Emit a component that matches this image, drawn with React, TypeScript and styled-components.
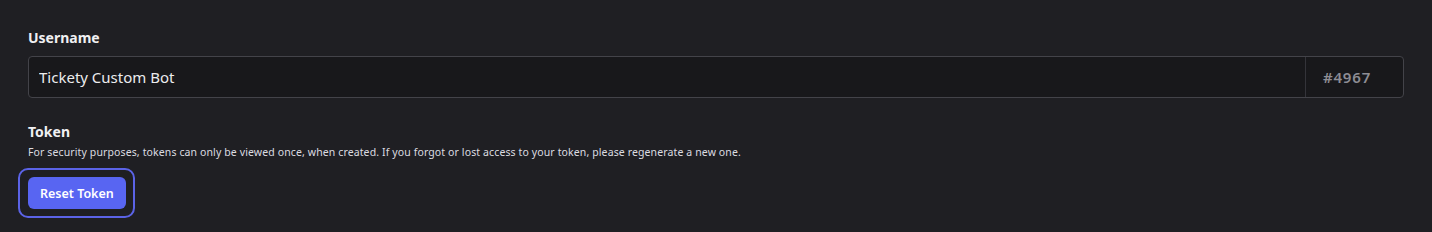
import styled, { createGlobalStyle } from 'styled-components'

const Global = createGlobalStyle`
  html, body { margin: 0; padding: 0; background: #1f1f23; }
  body { font-family: "Noto Sans", "Open Sans", sans-serif; color: #e8e8ea; }
`

const Page = styled.div`
  padding: 28px 28px 12px 28px;
  display: flex;
  flex-direction: column;
`

const Field = styled.div`
  display: flex;
  flex-direction: column;
`

const Label = styled.label`
  font-size: 14px;
  font-weight: 700;
  color: #f0f0f2;
  line-height: 20px;
`

const InputRow = styled.div`
  margin-top: 8px;
  height: 40px;
  display: flex;
  align-items: stretch;
  background: #18181b;
  border: 1px solid #434349;
  border-radius: 4px;
`

const TextInput = styled.input`
  flex: 1;
  min-width: 0;
  background: transparent;
  border: none;
  outline: none;
  color: #ececee;
  font-family: inherit;
  font-size: 15px;
  padding: 0 10px;
`

const Discrim = styled.div`
  width: 98px;
  border-left: 1px solid #34343a;
  display: flex;
  align-items: center;
  padding-left: 17px;
  box-sizing: border-box;
  color: #8d8d94;
  font-size: 15px;
  font-weight: 600;
  letter-spacing: 0.8px;
`

const Section = styled(Field)`
  margin-top: 24px;
`

const Hint = styled.p`
  margin: 3px 0 0;
  font-size: 10.5px;
  letter-spacing: 0.12px;
  color: #dcdce0;
  line-height: 14px;
`

const FocusRing = styled.div`
  margin: 9px 0 0 -10px;
  align-self: flex-start;
  padding: 7px 7px 7px 8px;
  border: 2px solid #5b63e6;
  border-radius: 10px;
`

const Button = styled.button<{ $primary?: boolean }>`
  display: block;
  height: 32px;
  padding: 0 12px;
  border: none;
  border-radius: 6px;
  background: ${p => (p.$primary ? '#5865f2' : '#4e5058')};
  color: #fff;
  font-family: inherit;
  font-size: 12.5px;
  font-weight: 600;
  cursor: pointer;
`

export default function App() {
  return (
    <>
      <Global />
      <Page>
        <Field>
          <Label>Username</Label>
          <InputRow>
            <TextInput defaultValue="Tickety Custom Bot" />
            <Discrim>#4967</Discrim>
          </InputRow>
        </Field>
        <Section>
          <Label>Token</Label>
          <Hint>
            For security purposes, tokens can only be viewed once, when created. If you forgot or lost access to your token, please regenerate a new one.
          </Hint>
          <FocusRing>
            <Button $primary>Reset Token</Button>
          </FocusRing>
        </Section>
      </Page>
    </>
  )
}
